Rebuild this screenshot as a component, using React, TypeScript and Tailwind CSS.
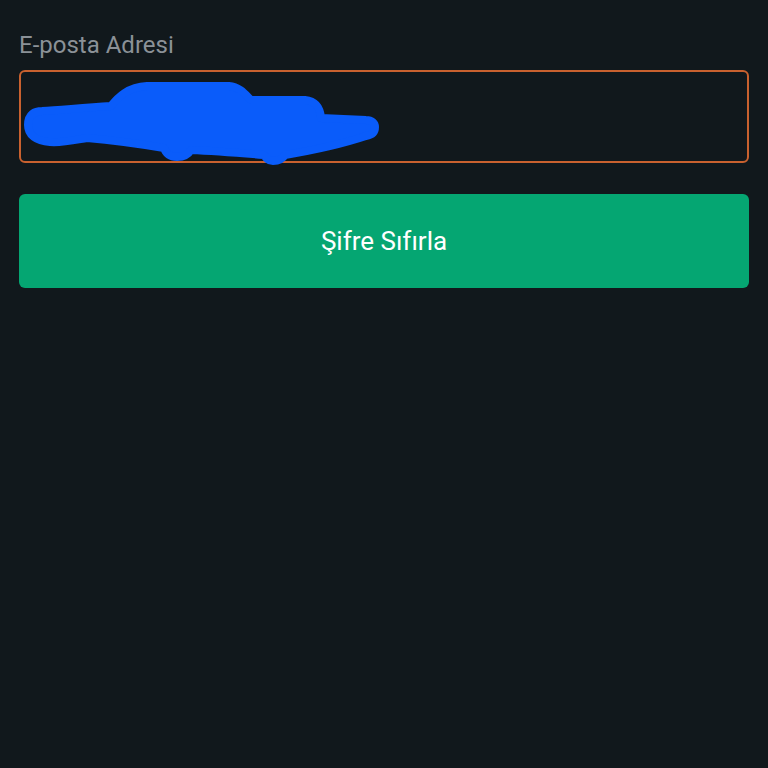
export default function App() {
  return (
    <div className="relative min-h-[768px] w-full bg-[#11181c] px-[19px] pt-[31px] font-['Roboto',_'Liberation_Sans',_sans-serif]">
      <label className="block text-[24px] leading-[28px] text-[#8b9197]">E-posta Adresi</label>
      <div className="relative mt-[11px] h-[93px] rounded-[6px] border-2 border-[#c9612f] bg-[#11181c]">
        <input
          type="email"
          className="h-full w-full bg-transparent px-4 text-[20px] text-white outline-none"
          defaultValue=""
        />
      </div>
      <button className="mt-[31px] flex h-[94px] w-full items-center justify-center rounded-[6px] bg-[#05a672] text-[26px] text-white">
        Şifre Sıfırla
      </button>
      {/* redaction scribble over the email value */}
      <svg className="pointer-events-none absolute left-0 top-0" width="768" height="200" viewBox="0 0 768 200">
        <path
          d="M28 125 C28 114 35 111 42 111 C60 110 80 108 111 106 C118 97 128 87 147 86 L229 86 C240 87 245 94 251 100 L305 100 C315 101 320 106 321 118 L366 120 C372 120 375 123 375 127 C375 132 372 135 366 136 C345 143 315 150 285 155 C282 160 278 161 273 161 C268 161 266 158 264 155 C240 153 215 151 191 150 C188 155 183 157 177 157 C170 157 166 154 164 148 C140 144 110 140 87 138 C75 140 62 143 50 142 C36 141 28 135 28 125 Z"
          fill="#0a5cfa"
          stroke="#0a5cfa"
          strokeWidth="8"
          strokeLinejoin="round"
        />
      </svg>
    </div>
  );
}
